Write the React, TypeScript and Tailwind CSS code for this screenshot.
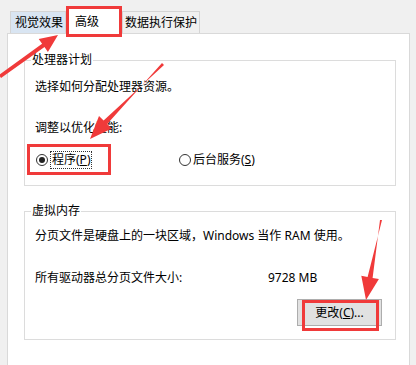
import React from "react";

const F = { fontFamily: '"Noto Sans", "Noto Sans CJK SC", sans-serif' };

export default function App() {
  return (
    <div
      className="relative w-[416px] h-[365px] overflow-hidden bg-[#f0f0f0] flex flex-col pl-[7px] pr-[6px] text-[12px] text-black"
      style={F}
    >
      {/* Tabs */}
      <div className="h-[33px] flex items-end pl-[3px] shrink-0">
        <div className="w-[56px] h-[22px] bg-[#d9e5f2] border border-[#d4d4d4] border-b-0 flex items-center pl-[4px] leading-[14px]">
          视觉效果
        </div>
        <div className="relative z-10 w-[56px] h-[31px] -mb-[4px] bg-white border-[3px] border-[#f03a3a] flex items-center pl-[6px] leading-[14px]">
          高级
        </div>
        <div className="w-[78px] h-[22px] bg-[#f0f0f0] border border-[#d4d4d4] border-b-0 flex items-center justify-center leading-[14px]">
          数据执行保护
        </div>
      </div>

      {/* Panel */}
      <div className="flex-1 bg-white border border-[#d9d9d9] border-b-0 pl-[16px] pr-[13px] flex flex-col">
        <fieldset className="mt-[19px] border border-[#dcdcdc] pl-[10px] pr-[10px] pb-[10px]">
          <legend className="-ml-[4px] px-[1px] leading-[14px]">处理器计划</legend>
          <div className="mt-[12px] leading-[16px]">选择如何分配处理器资源。</div>
          <div className="mt-[25px] leading-[16px]">调整以优化性能:</div>
          <div className="mt-[8px] flex items-center">
            <div className="-ml-[8px] w-[84px] h-[31px] border-[3px] border-[#f03a3a] flex items-center pl-[6px]">
              <span className="w-[12px] h-[12px] rounded-full border border-[#333] flex items-center justify-center shrink-0">
                <span className="w-[6px] h-[6px] rounded-full bg-[#222]" />
              </span>
              <span className="ml-[2px] border border-dotted border-[#333] px-[1px] leading-[16px]">
                程序(<span className="underline">P</span>)
              </span>
            </div>
            <div className="ml-[68px] flex items-center">
              <span className="w-[12px] h-[12px] rounded-full border border-[#333] shrink-0" />
              <span className="ml-[2px] leading-[16px]">
                后台服务(<span className="underline">S</span>)
              </span>
            </div>
          </div>
        </fieldset>

        <fieldset className="mt-[18px] border border-[#dcdcdc] pl-[10px] pr-[13px] pb-[13px]">
          <legend className="-ml-[4px] px-[1px] leading-[14px]">虚拟内存</legend>
          <div className="mt-[10px] leading-[16px]">
            分页文件是硬盘上的一块区域，Windows 当作 RAM 使用。
          </div>
          <div className="mt-[26px] flex leading-[16px]">
            <div className="w-[233px]">所有驱动器总分页文件大小:</div>
            <div>9728 MB</div>
          </div>
          <div className="mt-[13px] flex justify-end">
            <div className="relative">
              <div className="w-[85px] h-[27px] bg-[#e1e1e1] border border-[#adadad] flex items-center justify-center leading-[16px]">
                更改(<span className="underline">C</span>)...
              </div>
              <div className="absolute left-[5px] top-[1px] w-[77px] h-[31px] border-[3px] border-[#f03a3a]" />
            </div>
          </div>
        </fieldset>
      </div>

      {/* Annotation arrows */}
      <svg
        className="absolute inset-0 pointer-events-none z-20"
        width="416"
        height="365"
        viewBox="0 0 416 365"
      >
        <polygon
          fill="#f03a3a"
          points="-1,75 42.1,43.8 38.7,38.9 58,35 47.9,51.9 44.5,47.0 1,78"
        />
        <polygon
          fill="#f03a3a"
          points="162,63 107.2,124.1 111.8,128.6 90,139 99,116 103.6,120.5 164,65"
        />
        <polygon
          fill="#f03a3a"
          points="380,220 372.6,277.9 378.9,279.1 366,300 361.3,275.7 367.6,276.9 382,220"
        />
      </svg>
    </div>
  );
}
